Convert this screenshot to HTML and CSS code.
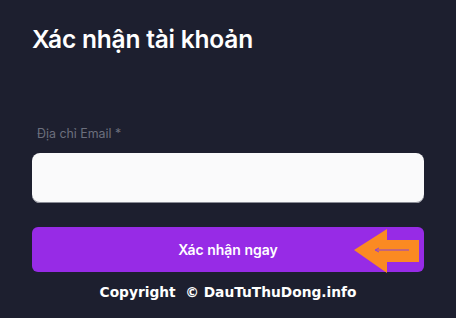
FILE: index.html
```html
<!DOCTYPE html>
<html lang="vi">
<head>
<meta charset="utf-8">
<link rel="stylesheet" href="styles.css">
</head>
<body>
<main class="page">
  <h1 class="title">Xác nhận tài khoản</h1>
  <form class="form">
    <label class="label" for="email">Địa chỉ Email *</label>
    <input class="input" id="email" type="email">
    <button class="btn" type="button">
      <span class="btn-text">Xác nhận ngay</span>
      <svg class="arrow" width="66" height="44" viewBox="0 0 66 44">
        <polygon points="0,21 33,0 33,11 65,11 65,33 33,33 33,44" fill="#fb8a22"/>
        <line x1="22" y1="21" x2="55" y2="21" stroke="#8b3fd6" stroke-width="1"/>
        <polyline points="25,19 21,21 25,23" fill="none" stroke="#8b3fd6" stroke-width="1"/>
      </svg>
    </button>
  </form>
  <p class="copy">Copyright &nbsp;© DauTuThuDong.info</p>
</main>
</body>
</html>
```
FILE: styles.css
```css
html, body {
  margin: 0;
  padding: 0;
  background: #1d1f2f;
}
.page {
  width: 456px;
  height: 318px;
  padding: 0 32px;
  box-sizing: border-box;
  font-family: Inter, "Noto Sans", sans-serif;
}
.title {
  margin: 0;
  padding-top: 24px;
  font-size: 24.5px;
  line-height: 30px;
  font-weight: 600;
  color: #ffffff;
  letter-spacing: -0.2px;
}
.form {
  display: flex;
  flex-direction: column;
  margin-top: 72px;
}
.label {
  padding-left: 5px;
  font-size: 12.4px;
  line-height: 16px;
  color: #6c6f7d;
}
.input {
  margin-top: 11px;
  height: 48px;
  border: none;
  border-radius: 8px;
  background: #fafafb;
  box-shadow: inset 0 -1px 0 #8a8c96;
  outline: none;
}
.btn {
  position: relative;
  margin-top: 24px;
  height: 45px;
  border: none;
  border-radius: 6px;
  background: #972be6;
  color: #ffffff;
  font-family: Inter, "Noto Sans", sans-serif;
  font-size: 14px;
  font-weight: 600;
  padding: 0;
}
.arrow {
  position: absolute;
  left: 322px;
  top: 2px;
}
.copy {
  margin: 12px 0 0;
  text-align: center;
  font-family: "DejaVu Sans", sans-serif;
  font-weight: bold;
  font-size: 13.75px;
  color: #ffffff;
}
```
